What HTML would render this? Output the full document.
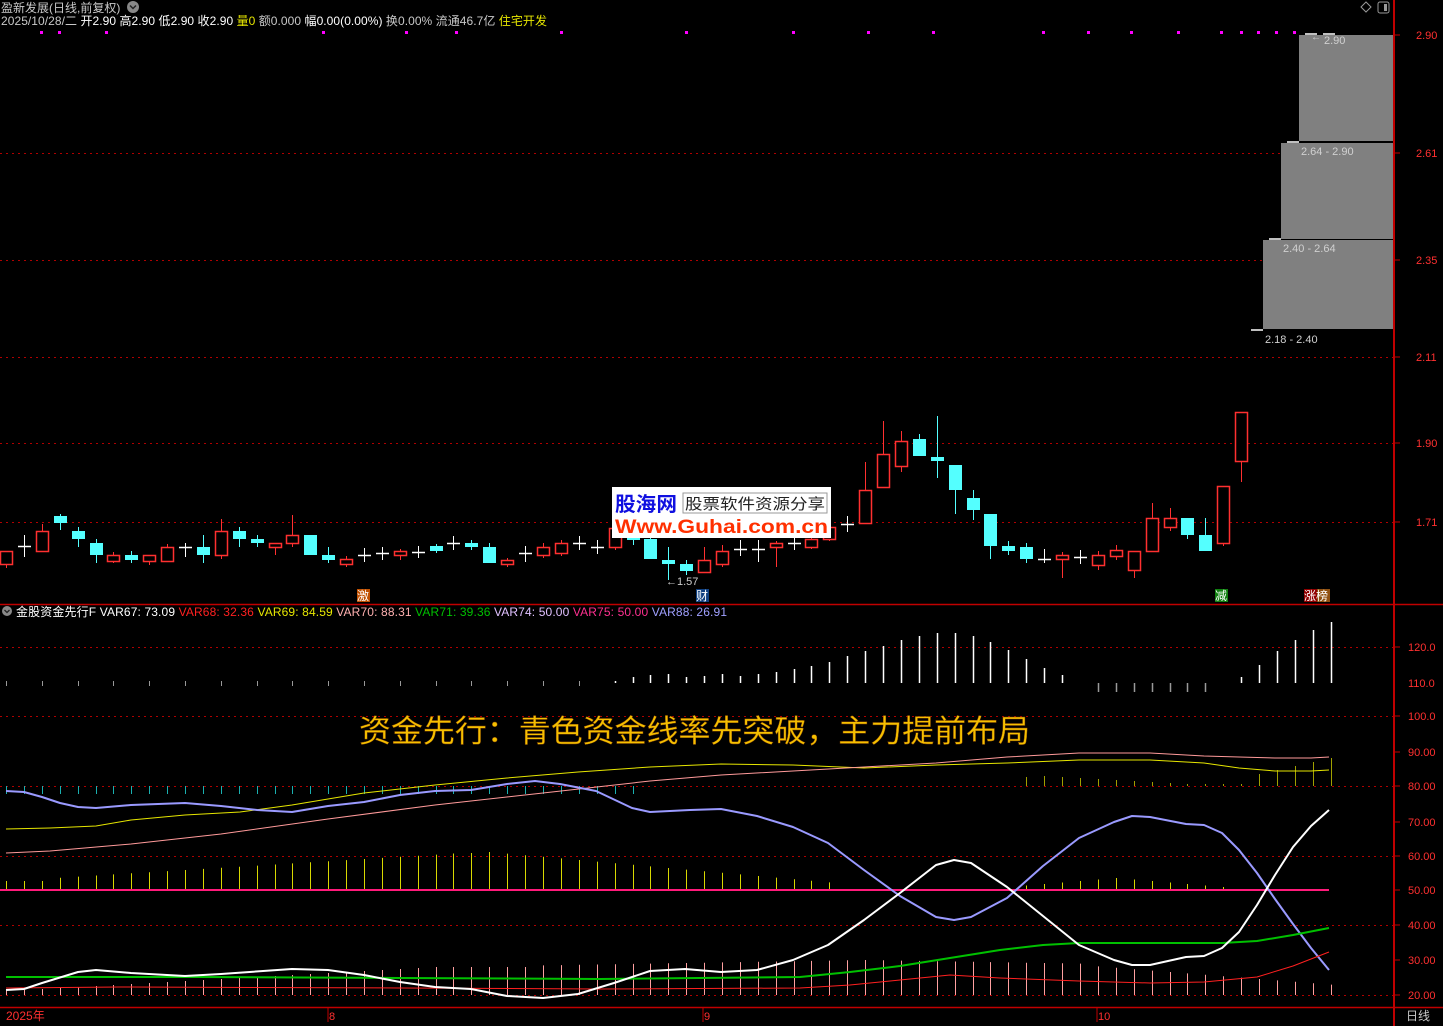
<!DOCTYPE html>
<html><head><meta charset="utf-8">
<style>
html,body{margin:0;padding:0;background:#000;width:1443px;height:1026px;overflow:hidden}
svg{display:block}
text{font-family:"Liberation Sans","Noto Sans CJK SC",sans-serif}
</style></head><body>
<svg id="s" width="1443" height="1026" xmlns="http://www.w3.org/2000/svg">
<rect width="1443" height="1026" fill="#000"/>
<g stroke="#b00000" stroke-width="1" stroke-dasharray="2,4">
<line x1="0" y1="153.5" x2="1393" y2="153.5"/><line x1="0" y1="260.5" x2="1393" y2="260.5"/>
<line x1="0" y1="357.5" x2="1393" y2="357.5"/><line x1="0" y1="443.5" x2="1393" y2="443.5"/>
<line x1="0" y1="522.5" x2="1393" y2="522.5"/>
<line x1="0" y1="647.5" x2="1393" y2="647.5"/><line x1="0" y1="716.5" x2="1393" y2="716.5"/>
<line x1="0" y1="786.5" x2="1393" y2="786.5"/><line x1="0" y1="856.5" x2="1393" y2="856.5"/>
<line x1="0" y1="925.5" x2="1393" y2="925.5"/><line x1="0" y1="995.5" x2="1393" y2="995.5"/>
</g>
<g fill="#808080">
<rect x="1299" y="35" width="94" height="106"/>
<rect x="1281" y="143" width="112" height="96"/>
<rect x="1263" y="240" width="130" height="89"/>
</g>
<g stroke="#fff" stroke-width="1.5">
<line x1="1305" y1="34" x2="1317" y2="34"/><line x1="1323" y1="34" x2="1335" y2="34"/>
<line x1="1287" y1="142" x2="1299" y2="142"/><line x1="1269" y1="239" x2="1281" y2="239"/>
<line x1="1251" y1="330" x2="1263" y2="330"/>
</g>
<g fill="#d0d0d0" font-size="11">
<text x="1324" y="44">2.90</text><text x="1301" y="155">2.64 - 2.90</text>
<text x="1283" y="252">2.40 - 2.64</text><text x="1265" y="343">2.18 - 2.40</text>
<text x="1311" y="40" font-size="10">←</text>
</g>
<g id="cand"></g>
<g id="ind"></g>
<line x1="0" y1="890" x2="1329" y2="890" stroke="#ff1a7a" stroke-width="2"/>
<g fill="none" stroke-linejoin="round">
<polyline stroke="#e6e600" stroke-width="1" points="6,829 50,828 96,826 131,820 185,815 240,812 292,805 364,793 435,785 507,778 578,772 650,767 721,764 793,765 864,768 936,765 1007,763 1079,760 1150,760 1204,763 1239,768 1275,771 1311,771 1329,770"/>
<polyline stroke="#ff9a9a" stroke-width="1" points="6,853 50,851 131,844 221,834 328,819 435,805 543,793 650,781 721,775 793,771 864,767 936,763 1007,757 1079,753 1150,753 1204,756 1239,757 1275,758 1311,758 1329,757"/>
<polyline stroke="#9a9aff" stroke-width="2" points="6,791 24,792 42,797 60,803 78,807 96,808 131,805 185,803 221,806 257,810 292,812 328,806 364,802 400,795 435,791 471,790 507,784 535,781 560,784 596,791 632,808 650,812 690,810 721,809 757,816 793,827 828,843 864,870 900,896 936,917 954,920 971,917 1007,898 1043,866 1079,838 1114,822 1132,816 1150,817 1186,824 1204,825 1222,833 1239,850 1257,873 1275,899 1293,924 1311,948 1329,970"/>
<polyline stroke="#00c000" stroke-width="2" points="6,977 200,977 400,978 600,979 800,977 850,972 900,966 950,958 1000,950 1043,945 1079,943 1222,943 1257,941 1293,935 1329,928"/>
<polyline stroke="#ff2020" stroke-width="1" points="6,988 120,987 400,988 600,989 800,988 850,985 900,980 950,975 1000,978 1079,981 1150,983 1204,982 1257,977 1293,966 1329,952"/>
<polyline stroke="#fff" stroke-width="2" points="6,990 24,989 42,983 78,972 96,970 131,973 185,976 221,974 292,969 328,970 364,975 400,982 435,987 471,989 507,996 543,998 578,994 614,983 650,971 685,969 721,972 757,970 793,960 828,945 864,920 900,893 936,865 954,860 971,863 1007,887 1043,916 1079,945 1114,960 1132,965 1150,965 1186,957 1204,956 1222,948 1239,932 1257,905 1275,875 1293,847 1311,826 1329,810"/>
</g>
<g fill="#ff00ff" id="dots"></g>
<line x1="0" y1="604.5" x2="1443" y2="604.5" stroke="#c00000" stroke-width="1.5"/>
<line x1="0" y1="1007.5" x2="1443" y2="1007.5" stroke="#c00000" stroke-width="1.5"/>
<line x1="1394" y1="0" x2="1394" y2="1026" stroke="#c00000" stroke-width="2"/>
<g stroke="#c00000"><line x1="328" y1="1007" x2="328" y2="1022"/><line x1="703" y1="1007" x2="703" y2="1022"/><line x1="1097" y1="1007" x2="1097" y2="1022"/></g>
<g fill="#ff3030" font-size="11">
<text x="1416" y="39">2.90</text><text x="1416" y="157">2.61</text><text x="1416" y="264">2.35</text>
<text x="1416" y="361">2.11</text><text x="1416" y="447">1.90</text><text x="1416" y="526">1.71</text>
<text x="1408" y="651">120.0</text><text x="1408" y="687">110.0</text><text x="1408" y="720">100.0</text>
<text x="1408" y="756">90.00</text><text x="1408" y="790">80.00</text><text x="1408" y="826">70.00</text>
<text x="1408" y="860">60.00</text><text x="1408" y="894">50.00</text><text x="1408" y="929">40.00</text>
<text x="1408" y="964">30.00</text><text x="1408" y="999">20.00</text>
<text x="6" y="1020" font-size="12">2025年</text><text x="329" y="1020">8</text><text x="704" y="1020">9</text><text x="1098" y="1020">10</text>
</g>
<g stroke="#c00000"><line x1="1394" y1="35" x2="1400" y2="35"/><line x1="1394" y1="153" x2="1400" y2="153"/><line x1="1394" y1="260" x2="1400" y2="260"/><line x1="1394" y1="357" x2="1400" y2="357"/><line x1="1394" y1="443" x2="1400" y2="443"/><line x1="1394" y1="522" x2="1400" y2="522"/><line x1="1394" y1="647" x2="1400" y2="647"/><line x1="1394" y1="716" x2="1400" y2="716"/><line x1="1394" y1="752" x2="1400" y2="752"/><line x1="1394" y1="786" x2="1400" y2="786"/><line x1="1394" y1="822" x2="1400" y2="822"/><line x1="1394" y1="856" x2="1400" y2="856"/><line x1="1394" y1="890" x2="1400" y2="890"/><line x1="1394" y1="925" x2="1400" y2="925"/><line x1="1394" y1="960" x2="1400" y2="960"/><line x1="1394" y1="995" x2="1400" y2="995"/></g>
<text x="1406" y="1020" fill="#c8c8c8" font-size="12">日线</text>
<text x="1" y="12" fill="#c8c8c8" font-size="12">盈新发展(日线,前复权)</text>
<circle cx="133" cy="7" r="6" fill="#888"/><path d="M130 5.5 L133 8.5 L136 5.5" stroke="#222" stroke-width="1.5" fill="none"/>
<text x="1" y="25" font-size="12" fill="#c8c8c8" textLength="546" lengthAdjust="spacing">2025/10/28/二 <tspan fill="#fff">开2.90 高2.90 低2.90 收2.90</tspan> <tspan fill="#e6e600">量0</tspan> 额0.000 <tspan fill="#fff">幅0.00(0.00%)</tspan> 换0.00% 流通46.7亿 <tspan fill="#e6e600">住宅开发</tspan></text>
<path d="M1366 2 L1371 7 L1366 12 L1361 7 Z" stroke="#999" fill="none"/>
<rect x="1378" y="2" width="11" height="11" rx="2" stroke="#999" fill="none"/><rect x="1384" y="4" width="3" height="7" fill="#999"/>
<circle cx="7" cy="611" r="5" fill="#888"/><path d="M4.5 610 L7 612.5 L9.5 610" stroke="#222" stroke-width="1.3" fill="none"/>
<text x="16" y="616" font-size="12" textLength="711" lengthAdjust="spacing"><tspan fill="#fff">金股资金先行F  VAR67: 73.09 </tspan><tspan fill="#ff2020">VAR68: 32.36 </tspan><tspan fill="#e6e600">VAR69: 84.59 </tspan><tspan fill="#ffb0b0">VAR70: 88.31 </tspan><tspan fill="#00c000">VAR71: 39.36 </tspan><tspan fill="#e0c0ff">VAR74: 50.00 </tspan><tspan fill="#ff3090">VAR75: 50.00 </tspan><tspan fill="#a0a0ff">VAR88: 26.91</tspan></text>
<rect x="357" y="589" width="13" height="13" fill="#c05000"/><text x="357" y="600" font-size="12" fill="#fff">激</text>
<rect x="696" y="589" width="13" height="13" fill="#104080"/><text x="696" y="600" font-size="12" fill="#fff">财</text>
<rect x="1215" y="589" width="13" height="13" fill="#108010"/><text x="1215" y="600" font-size="12" fill="#fff">减</text>
<rect x="1304" y="589" width="13" height="13" fill="#900000"/><rect x="1317" y="589" width="13" height="13" fill="#905010"/><text x="1304" y="600" font-size="12" fill="#fff">涨榜</text>
<text x="666" y="585" font-size="11" fill="#ccc">←1.57</text>
<text x="359" y="742" font-size="31" fill="#f5c000" stroke="#804000" stroke-width="0.4" textLength="671" lengthAdjust="spacingAndGlyphs">资金先行：青色资金线率先突破，主力提前布局</text>
<rect x="612" y="487" width="219" height="51" fill="#fff"/>
<text x="615" y="511" font-size="20" font-weight="bold" fill="#1010e0" textLength="62" lengthAdjust="spacingAndGlyphs">股海网</text>
<g stroke="#999" fill="none"><rect x="683" y="493" width="144" height="20"/></g>
<text x="685" y="509" font-size="15" fill="#222" textLength="140" lengthAdjust="spacingAndGlyphs">股票软件资源分享</text>
<text x="615" y="533" font-size="19" font-weight="bold" fill="#ff3000" textLength="213" lengthAdjust="spacingAndGlyphs">Www.Guhai.com.cn</text>
<script>
(function(){
var NS="http://www.w3.org/2000/svg",c=document.getElementById("cand"),ind=document.getElementById("ind");
function el(p,t,a){var e=document.createElementNS(NS,t);for(var k in a)e.setAttribute(k,a[k]);p.appendChild(e);return e;}
function X(i){return Math.round(6+i*17.9);}
var d=[["r",551,564,551,568],["x",546,546,535,557],["r",531,551,524,551],["c",516,523,514,530],["c",531,539,527,547],["c",543,555,539,563],["r",555,561,552,563],["c",555,560,551,563],["r",555,561,555,565],["r",547,561,544,561],
["x",547,547,543,557],["c",547,555,535,563],["r",531,555,519,559],["c",531,539,527,547],["c",539,543,535,547],["r",543,547,543,555],["r",535,543,515,547],["c",535,555,535,555],["c",555,560,547,563],["r",559,564,556,567],
["x",555,555,548,562],["x",553,553,547,560],["r",551,555,549,560],["x",552,552,546,558],["c",546,551,544,553],["x",543,543,536,550],["c",543,547,540,550],["c",547,563,543,563],["r",560,564,558,567],["x",553,553,546,562],
["r",547,555,543,558],["r",543,553,540,556],["x",543,543,536,550],["x",547,547,540,554],["r",528,547,524,550],["c",530,540,525,545],["c",539,559,535,559],["c",560,564,547,580],["c",564,571,560,575],["r",560,572,547,572],
["r",551,564,545,567],["x",549,549,540,556],["x",549,549,540,562],["r",543,547,541,567],["x",543,543,536,550],["r",539,547,537,549],["r",527,539,521,541],["x",524,524,516,532],["r",490,523,462,523],["r",454,487,421,487],
["r",441,466,431,472],["c",439,456,434,456],["c",457,461,416,478],["c",465,490,465,514],["c",498,510,490,520],["c",514,546,514,559],["c",546,551,541,555],["c",547,559,543,563],["x",559,559,549,563],["r",555,559,552,578],
["x",557,557,550,564],["r",555,565,551,570],["r",550,556,545,560],["r",551,570,551,578],["r",518,551,503,551],["r",518,527,508,531],["c",518,535,518,539],["c",535,551,518,551],["r",486,543,486,546],["r",412,461,412,482]];
d.forEach(function(q,i){var x=X(i),col=q[0]=="r"?"#ff3030":q[0]=="c"?"#54ffff":"#fff";
 el(c,"line",{x1:x+.5,x2:x+.5,y1:q[3],y2:q[4],stroke:col,"stroke-width":1});
 if(q[0]=="x"){el(c,"line",{x1:x-6,x2:x+7,y1:q[1]+.5,y2:q[1]+.5,stroke:col,"stroke-width":1.5});}
 else if(q[0]=="r"){el(c,"rect",{x:x-5.5,y:q[1]+.5,width:12,height:q[2]-q[1],fill:"#000",stroke:col,"stroke-width":1.5});}
 else el(c,"rect",{x:x-6,y:q[1],width:13,height:Math.max(2,q[2]-q[1]),fill:col});
});
var w={34:681,35:677,36:675,37:674,38:677,39:676,40:674,41:676,42:674,43:672,44:669,45:666,46:662,47:656,48:651,49:646,50:640,51:636,52:633,53:633,54:636,55:642,56:650,57:659,58:668,59:675,69:677,70:665,71:651,72:640,73:630,74:622};
for(var i=0;i<75;i++){var x=X(i)+.5;
 if(w[i]) el(ind,"line",{x1:x,x2:x,y1:w[i],y2:683,stroke:"#fff","stroke-width":1.5});
 else if(i<34 && i%2==0) el(ind,"line",{x1:x,x2:x,y1:681,y2:686,stroke:"#999","stroke-width":1});
 else if(i>=61&&i<=67) el(ind,"line",{x1:x,x2:x,y1:683,y2:692,stroke:"#999","stroke-width":1.5});
 if(i<36) el(ind,"line",{x1:x,x2:x,y1:786,y2:794,stroke:"#1ab0b0","stroke-width":1});
 var yh;
 if(i<=26) yh=889-(i<=2?8:Math.min(36,8+i*1.1));
 else if(i<=49) yh=852+(i-27)*1.6;
 else if(i<=56) yh=888;
 else if(i<=68) yh=878+Math.abs(i-62)*1.5;
 else yh=null;
 if(yh && i>46 && i<57) yh=null;
 if(yh) el(ind,"line",{x1:x,x2:x,y1:yh,y2:890,stroke:"#d8d800","stroke-width":1});
 if(i>=57){var oh=786-(i<70?Math.max(2,10-Math.abs(i-58)):8+(i-69)*4);el(ind,"line",{x1:x,x2:x,y1:oh,y2:786,stroke:"#a0a000","stroke-width":1});}
 var ph;
 if(i<30) ph=994-Math.min(27,3+i*1.0);
 else if(i<=60) ph=960+Math.abs(i-48)*0.3;
 else ph=965+(i-60)*1.4;
 el(ind,"line",{x1:x,x2:x,y1:ph,y2:995,stroke:"#ffa0a0","stroke-width":1});
}
var dots=[40,58,105,322,405,455,560,685,792,867,932,1042,1087,1130,1177,1220,1240,1257,1275,1293];
var g=document.getElementById("dots");dots.forEach(function(x){el(g,"rect",{x:x,y:31,width:3,height:3});});
})();
</script>
</svg>
</body></html>
